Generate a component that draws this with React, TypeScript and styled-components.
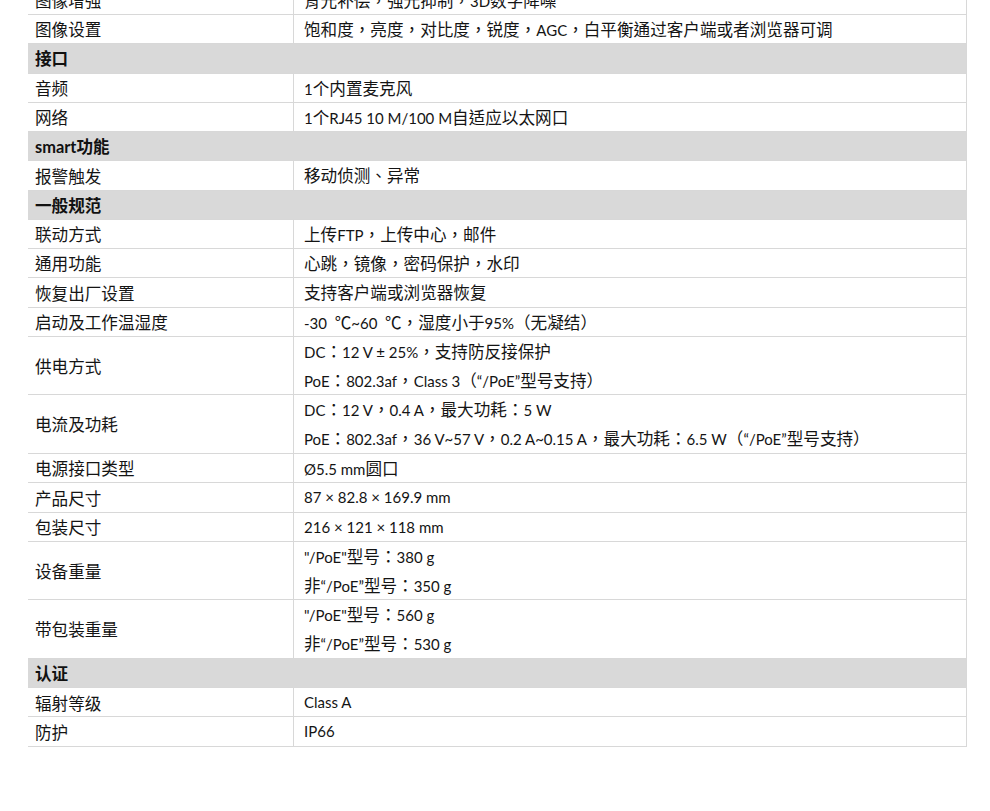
import React from "react";
import styled, { createGlobalStyle } from "styled-components";

const Global = createGlobalStyle`
  html, body { margin: 0; padding: 0; background: #fff; }
  body {
    font-family: "Lato", "Noto Sans CJK TC", sans-serif;
    color: #141414;
    text-spacing-trim: space-all;
  }
`;

const Page = styled.div`
  padding: 0 24px 0 28px;
  overflow: hidden;
  height: 811px;
`;

const Table = styled.div`
  width: 938px;
  margin-top: -14.3px;
  border-right: 1px solid #d8d8d8;
  display: flex;
  flex-direction: column;
`;

const Row = styled.div<{ $lines: number }>`
  display: grid;
  grid-template-columns: 265px 1fr;
  height: ${(p) => p.$lines * 29.28}px;
  box-sizing: border-box;
  border-bottom: 1px solid #d8d8d8;
`;

const Header = styled.div`
  height: 29.28px;
  box-sizing: border-box;
  background: #d9d9d9;
  display: flex;
  align-items: center;
  padding-left: 7px;
  font-size: 16.4px;
  font-weight: 700;
  color: #111;
  border-bottom: 1px solid #d8d8d8;
  white-space: pre;
`;

const Label = styled.div`
  display: flex;
  align-items: center;
  padding-left: 7px;
  font-size: 15px;
  white-space: pre;
`;

const Value = styled.div`
  border-left: 1px solid #d8d8d8;
  padding-left: 10px;
  display: flex;
  flex-direction: column;
  justify-content: center;
  font-size: 15px;
`;

const Line = styled.div`
  height: 28.8px;
  line-height: 28.8px;
  white-space: pre;
`;

const Han = styled.span`
  font-family: "Noto Sans CJK TC", "Noto Sans CJK SC", sans-serif;
  font-size: 16.6px;
  text-spacing-trim: space-all;
`;

const hanRe = /([\u2103\u3000-\u303f\u3400-\u9fff\uff00-\uffef]+)/;

function Mixed({ text }: { text: string }) {
  const parts = text.split(hanRe);
  return (
    <>
      {parts.map((p, i) =>
        p === "" ? null : i % 2 === 1 ? <Han key={i}>{p}</Han> : <React.Fragment key={i}>{p}</React.Fragment>
      )}
    </>
  );
}

type Item =
  | { kind: "h"; title: string }
  | { kind: "r"; label: string; values: string[] };

const data: Item[] = [
  { kind: "r", label: "图像增强", values: ["背光补偿，强光抑制，3D数字降噪"] },
  { kind: "r", label: "图像设置", values: ["饱和度，亮度，对比度，锐度，AGC，白平衡通过客户端或者浏览器可调"] },
  { kind: "h", title: "接口" },
  { kind: "r", label: "音频", values: ["1个内置麦克风"] },
  { kind: "r", label: "网络", values: ["1个RJ45 10 M/100 M自适应以太网口"] },
  { kind: "h", title: "smart功能" },
  { kind: "r", label: "报警触发", values: ["移动侦测、异常"] },
  { kind: "h", title: "一般规范" },
  { kind: "r", label: "联动方式", values: ["上传FTP，上传中心，邮件"] },
  { kind: "r", label: "通用功能", values: ["心跳，镜像，密码保护，水印"] },
  { kind: "r", label: "恢复出厂设置", values: ["支持客户端或浏览器恢复"] },
  { kind: "r", label: "启动及工作温湿度", values: ["-30  ℃~60  ℃，湿度小于95%（无凝结）"] },
  { kind: "r", label: "供电方式", values: ["DC：12 V ± 25%，支持防反接保护", "PoE：802.3af，Class 3（“/PoE”型号支持）"] },
  { kind: "r", label: "电流及功耗", values: ["DC：12 V，0.4 A，最大功耗：5 W", "PoE：802.3af，36 V~57 V，0.2 A~0.15 A，最大功耗：6.5 W（“/PoE”型号支持）"] },
  { kind: "r", label: "电源接口类型", values: ["Ø5.5 mm圆口"] },
  { kind: "r", label: "产品尺寸", values: ["87 × 82.8 × 169.9 mm"] },
  { kind: "r", label: "包装尺寸", values: ["216 × 121 × 118 mm"] },
  { kind: "r", label: "设备重量", values: ["\"/PoE\"型号：380 g", "非“/PoE”型号：350 g"] },
  { kind: "r", label: "带包装重量", values: ["\"/PoE\"型号：560 g", "非“/PoE”型号：530 g"] },
  { kind: "h", title: "认证" },
  { kind: "r", label: "辐射等级", values: ["Class A"] },
  { kind: "r", label: "防护", values: ["IP66"] },
];

export default function App() {
  return (
    <>
      <Global />
      <Page>
        <Table>
          {data.map((item, i) =>
            item.kind === "h" ? (
              <Header key={i}>
                <Mixed text={item.title} />
              </Header>
            ) : (
              <Row key={i} $lines={item.values.length}>
                <Label>
                  <Mixed text={item.label} />
                </Label>
                <Value>
                  {item.values.map((v, j) => (
                    <Line key={j}>
                      <Mixed text={v} />
                    </Line>
                  ))}
                </Value>
              </Row>
            )
          )}
        </Table>
      </Page>
    </>
  );
}
